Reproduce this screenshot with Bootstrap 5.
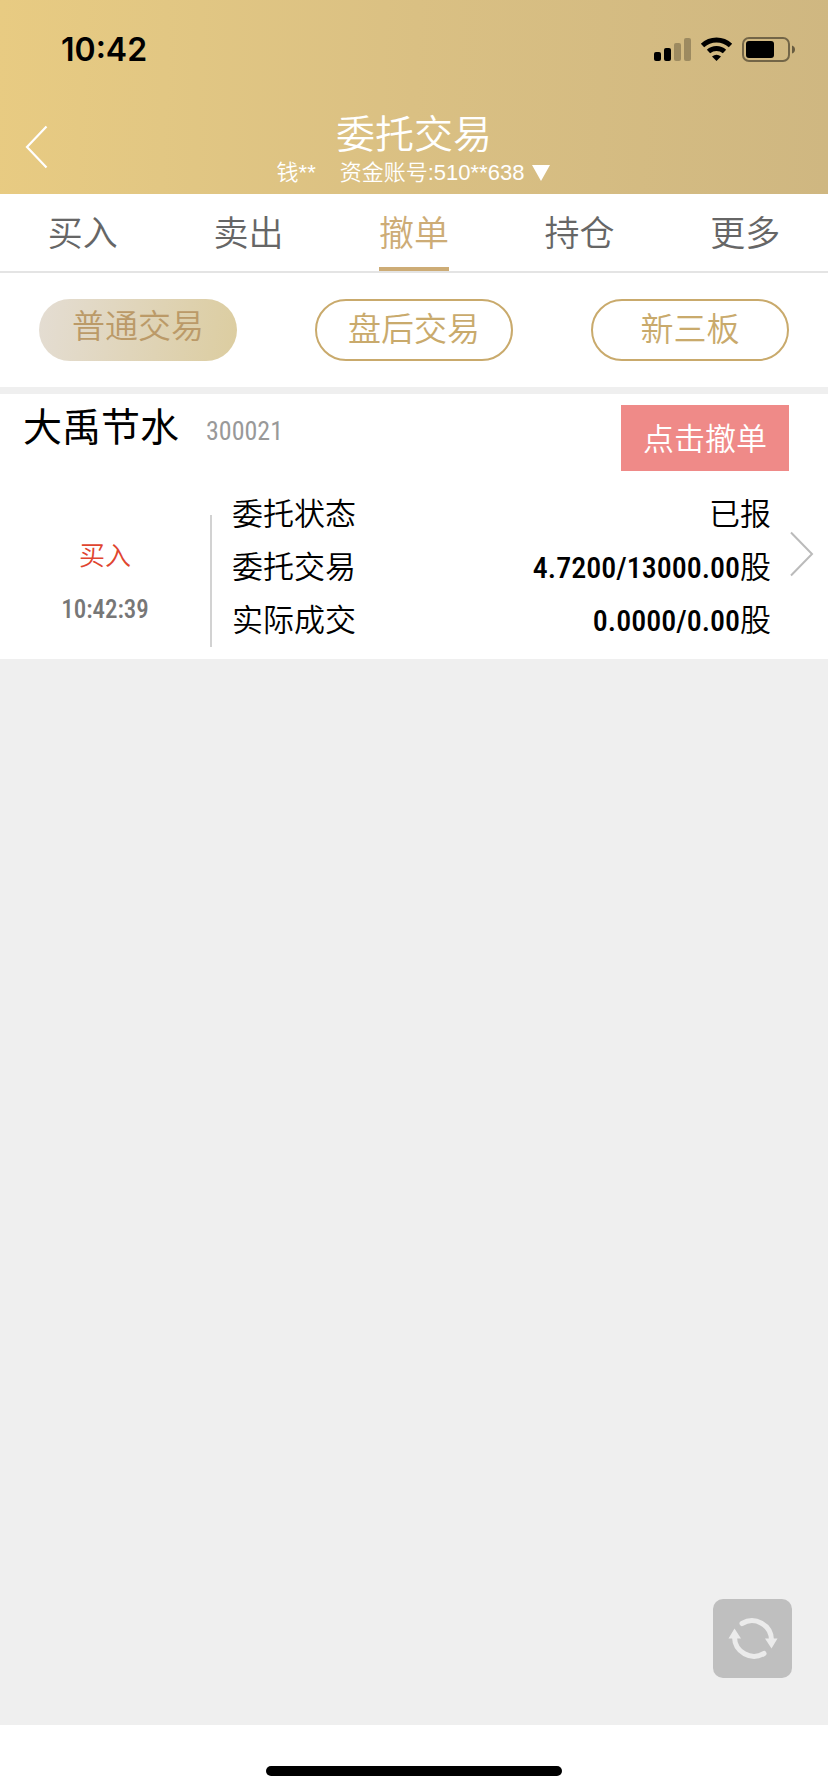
<!DOCTYPE html>
<html lang="zh-CN">
<head>
<meta charset="utf-8">
<meta name="viewport" content="width=device-width, initial-scale=1">
<title>委托交易</title>
<link href="https://cdn.jsdelivr.net/npm/bootstrap@5.3.0/dist/css/bootstrap.min.css" rel="stylesheet">
<style>
  :root { --gold: #c9aa6c; --page: #efefef; }
  body { font-family: "Liberation Sans", "Noto Sans CJK SC", sans-serif; font-weight: 350; color: #000; background: #fff; }
  .app-head { background: linear-gradient(92deg, #e8cb82, #e2c783 20%, #dac083 50%, #cfb781); color: #fff; height: 194px; }
  .status-row { height: 100px; padding: 0 33px 0 61px; }
  .clock { font: 600 32px/40px Inter, sans-serif; color: #000; }
  .title-row { padding: 0 24px; }
  .back-btn { width: 28px; height: 48px; margin-top: 22px; }
  .page-title { font-size: 39px; line-height: 46px; margin: 12px 0 0; font-weight: 350; }
  .account-btn { font-size: 22px; line-height: 30px; color: #fff; font-weight: 350; }
  .main-tabs { border-bottom: 2px solid #e4e4e4; }
  .main-tabs a { font-size: 35px; line-height: 67px; padding-top: 6px; color: #666; border-bottom: 4px solid transparent; text-decoration: none; }
  .main-tabs a.active { color: #cdac76; border-color: #cdac76; }
  .sub-tabs { padding: 26px 0; border-bottom: 7px solid var(--page); }
  .pill { width: 72%; height: 62px; border: 2px solid var(--gold); color: var(--gold); background: #fff; font-size: 33px; line-height: 58px; padding: 0; font-weight: 350; }
  .pill.active { border-color: transparent; color: #bb9a68; background: linear-gradient(100deg, #e4ddd3, #dfd3b4 60%, #dccda0) border-box; padding-bottom: 6px; line-height: 52px; }
  .order { height: 265px; padding: 11px 15px 0 0; }
  .stock-name { font-size: 39px; line-height: 46px; margin: 0; padding-left: 23px; font-weight: 400; }
  .num { font-family: "Roboto Condensed", "Noto Sans CJK SC", sans-serif; font-weight: 500; }
  .stock-code { font-size: 26px; line-height: 52px; color: #999; margin-left: 27px; font-weight: 400; }
  .cancel-btn { background: #ef8a88; color: #fff; font-size: 31px; line-height: 62px; padding: 4px 0 0; width: 168px; margin-right: 24px; font-weight: 350; }
  .side { width: 210px; line-height: 53px; font-size: 26px; padding-top: 59px; }
  .side .kind { color: #e0452f; }
  .side .num { color: #777; font-size: 25px; }
  .rule { width: 2px; height: 132px; background: #d2d2d2; margin-top: 44px; }
  .detail { font-size: 31px; line-height: 53px; margin: 17px 19px 0 20px; }
  .detail dt { font-weight: 350; }
  .detail .num { font-size: 30px; }
  .go { width: 23px; margin-top: 60px; }
  .empty-area { background: var(--page); }
  .refresh-btn { right: 36px; bottom: 47px; width: 79px; height: 79px; border-radius: 10px; background: #bfbfbf; }
  .home-zone { height: 67px; padding-top: 41px; }
  .home-bar { width: 296px; height: 10px; background: #000; }
</style>
</head>
<body class="min-vh-100 d-flex flex-column">
<header class="app-head">
  <div class="status-row d-flex justify-content-between align-items-center">
    <span class="clock">10:42</span>
    <svg width="142" height="26" viewBox="0 0 142 26" role="img" aria-label="信号与电量">
      <rect x="1" y="15" width="7" height="9" rx="2"/><rect x="11" y="11" width="7" height="13" rx="2"/>
      <g opacity=".25"><rect x="21" y="6" width="7" height="18" rx="2"/><rect x="31" y="1" width="7" height="23" rx="2"/></g>
      <g fill="none" stroke="#000" stroke-width="5"><path d="M49.500 8.500a20.500 20.500 0 0 1 28 0"/><path d="M55.500 14.500a12 12 0 0 1 16 0"/></g>
      <path d="M59 19.500q4.500-3.500 9 0L63.500 24z"/>
      <rect x="90" y="1" width="46" height="23" rx="6" fill="none" stroke="#000" stroke-opacity=".45" stroke-width="2"/>
      <rect x="93" y="4" width="28" height="17" rx="3"/><path d="M139 8.500q3 1 3 4t-3 4z" opacity=".5"/>
    </svg>
  </div>
  <div class="title-row d-flex align-items-start">
    <button class="btn p-0 border-0 back-btn" aria-label="返回"><svg class="d-block" width="28" height="46" viewBox="0 0 28 46" fill="none" stroke="#fff" stroke-width="2.200"><path d="M22.500 3.500L3 24l19.500 20.500"/></svg></button>
    <div class="flex-grow-1 text-center">
      <h1 class="page-title">委托交易</h1>
      <button class="btn p-0 border-0 account-btn d-inline-flex align-items-center"><span>钱**</span><span class="ms-4">资金账号:510**638</span><svg class="ms-2" width="19" height="18" viewBox="0 0 19 18" fill="#fff"><path d="M0 1h18L9 17z"/></svg></button>
    </div>
    <div class="back-btn"></div>
  </div>
</header>
<nav class="main-tabs row row-cols-5 g-0 text-center">
  <div class="col"><a class="d-inline-block" href="#">买入</a></div>
  <div class="col"><a class="d-inline-block" href="#">卖出</a></div>
  <div class="col"><a class="d-inline-block active" href="#" aria-current="page">撤单</a></div>
  <div class="col"><a class="d-inline-block" href="#">持仓</a></div>
  <div class="col"><a class="d-inline-block" href="#">更多</a></div>
</nav>
<div class="sub-tabs row row-cols-3 g-0 text-center">
  <div class="col"><button class="btn rounded-pill pill active">普通交易</button></div>
  <div class="col"><button class="btn rounded-pill pill">盘后交易</button></div>
  <div class="col"><button class="btn rounded-pill pill">新三板</button></div>
</div>
<section class="order">
  <div class="d-flex align-items-start">
    <h2 class="stock-name">大禹节水</h2>
    <span class="stock-code num">300021</span>
    <button class="btn border-0 rounded-0 ms-auto cancel-btn">点击撤单</button>
  </div>
  <div class="d-flex align-items-start">
    <div class="side text-center"><div class="kind">买入</div><div class="num">10:42:39</div></div>
    <div class="rule"></div>
    <dl class="detail flex-grow-1">
      <div class="d-flex justify-content-between"><dt>委托状态</dt><dd class="m-0">已报</dd></div>
      <div class="d-flex justify-content-between"><dt>委托交易</dt><dd class="m-0"><span class="num">4.7200/13000.00</span>股</dd></div>
      <div class="d-flex justify-content-between"><dt>实际成交</dt><dd class="m-0"><span class="num">0.0000/0.00</span>股</dd></div>
    </dl>
    <a class="go" href="#" aria-label="详情"><svg class="d-block" width="24" height="46" viewBox="0 0 24 46" fill="none" stroke="#bbb" stroke-width="2"><path d="M1 1.500L22 23 1 44.500"/></svg></a>
  </div>
</section>
<main class="empty-area flex-grow-1 position-relative">
  <button class="btn border-0 p-0 position-absolute refresh-btn" aria-label="刷新">
    <svg class="d-block" width="79" height="79" viewBox="0 0 79 79" fill="none" stroke="#ebebeb" stroke-width="5" stroke-linecap="round"><path d="M29 24.500A19.500 19.500 0 0 1 58.500 41M51 54.500A19.500 19.500 0 0 1 21.500 38"/><path d="M52 39.500h12.500L58.500 49.500zM15.500 39.500H28L21.500 29.500z" fill="#ebebeb" stroke="none"/></svg>
  </button>
</main>
<footer class="home-zone"><div class="home-bar rounded-pill mx-auto"></div></footer>
<script src="https://cdn.jsdelivr.net/npm/bootstrap@5.3.0/dist/js/bootstrap.bundle.min.js"></script>
</body>
</html>
